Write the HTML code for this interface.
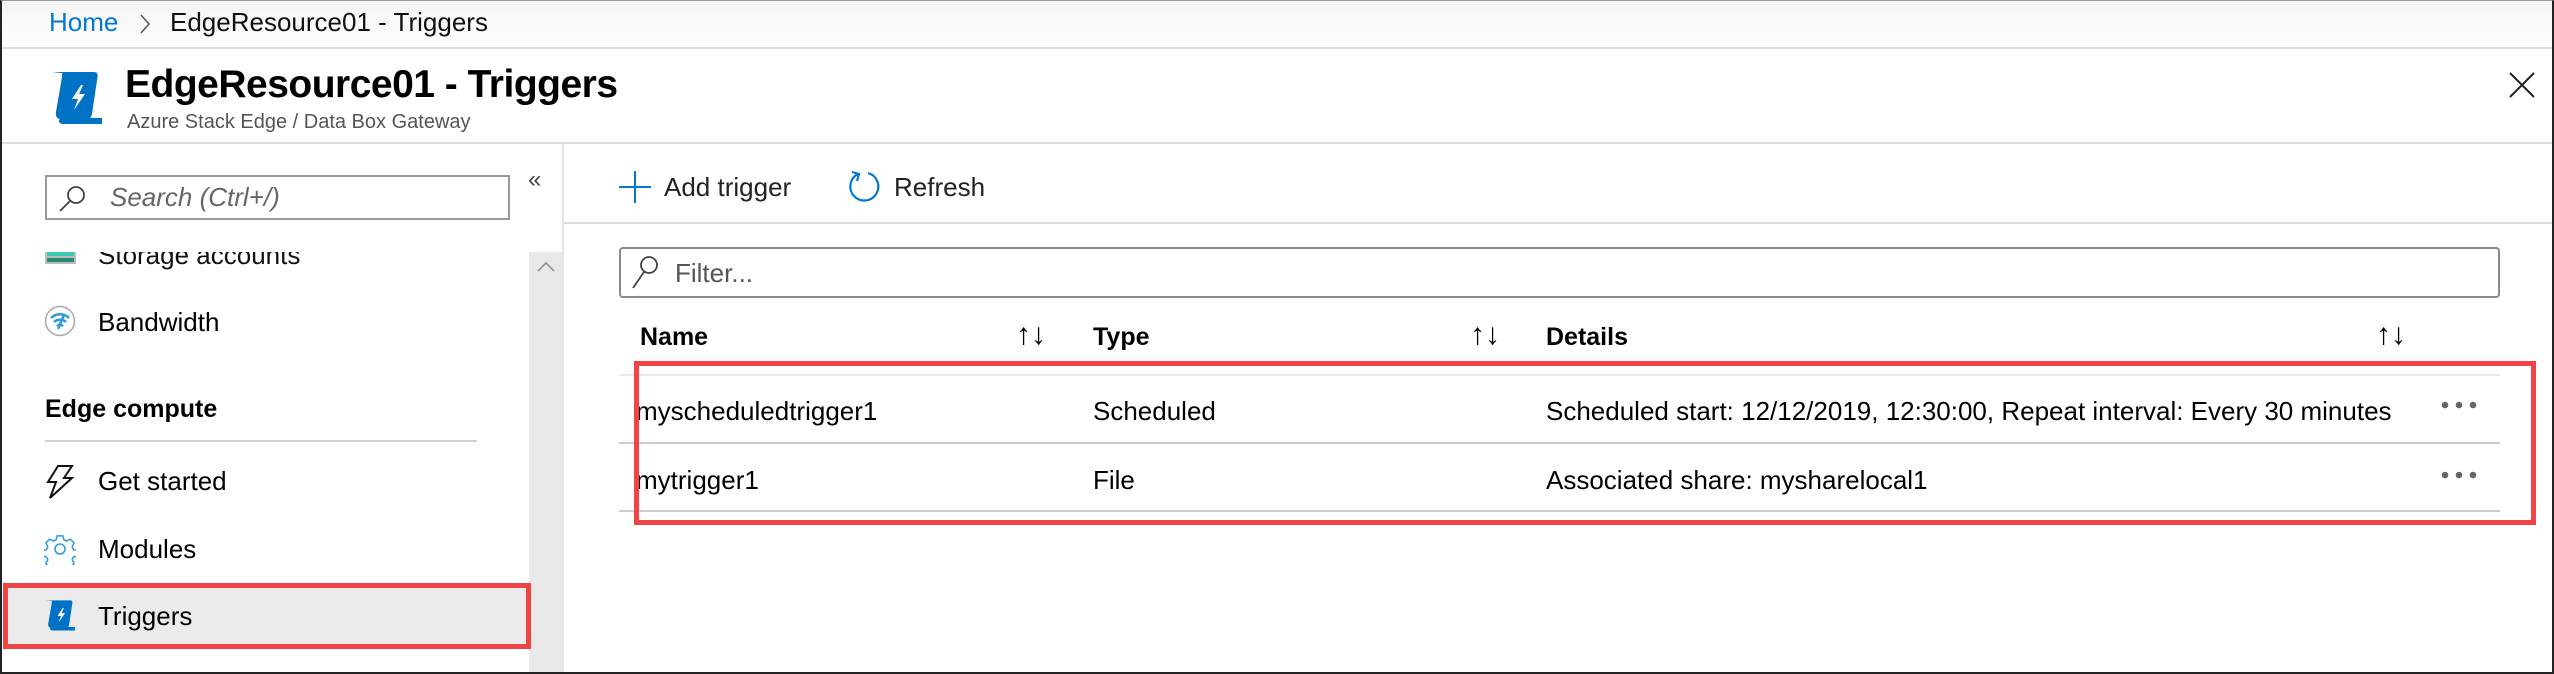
<!DOCTYPE html>
<html><head><meta charset="utf-8"><style>
*{margin:0;padding:0;box-sizing:border-box}
body{width:2554px;height:674px;overflow:hidden;background:#fff;font-family:"Liberation Sans",sans-serif;color:#000;position:relative}
.a{position:absolute;white-space:nowrap}
.t{font-size:26px;line-height:30px}
</style></head><body>
<div class="a" style="left:0;top:0;width:2554px;height:674px;border:2px solid #222;border-top:1px solid #999;z-index:50;pointer-events:none"></div>
<div class="a" style="left:0;top:0;width:2554px;height:49px;background:linear-gradient(#f4f4f4,#fff)"></div>
<div class="a" style="left:0;top:47px;width:2554px;height:2px;background:#ddd"></div>
<div class="a t" style="left:49px;top:7px;color:#0078d4">Home</div>
<svg class="a" style="left:138px;top:13px" width="14" height="22"><path d="M3 2l8 9-8 9" fill="none" stroke="#555" stroke-width="1.5"/></svg>
<div class="a t" style="left:170px;top:7px;color:#111">EdgeResource01 - Triggers</div>
<svg class="a" style="left:50px;top:68px" width="56" height="62" viewBox="0 0 56 62"><path d="M2 4h12c3 0 5 1 5 4v0H14c0-2-1-3-3-3z" fill="#0072c6"/><path d="M16 4h28c3 0 4 2 3.5 5L42 46c-1 4-3 6-6 6H14c-6 0-9-3-8-8L12 9c0-2-1-4 4-5z" fill="#0072c6"/><path d="M14 50h38v6H14c-3 0-5-1-5-3s2-3 5-3z" fill="#0072c6"/><path d="M31 17l-9 14h6l-4 11 11-16h-6l4-9z" fill="#fff"/></svg>
<div class="a" style="left:125px;top:62px;font-size:39px;line-height:46px;font-weight:600;letter-spacing:-0.5px">EdgeResource01 - Triggers</div>
<div class="a" style="left:127px;top:110px;font-size:20px;line-height:24px;color:#555">Azure Stack Edge / Data Box Gateway</div>
<svg class="a" style="left:2508px;top:71px" width="28" height="28"><path d="M2 2l24 24M26 2L2 26" stroke="#222" stroke-width="2"/></svg>
<div class="a" style="left:0;top:142px;width:2554px;height:2px;background:#ddd"></div>
<div class="a" style="left:562px;top:144px;width:2px;height:530px;background:#e4e4e4"></div>
<div class="a" style="left:529px;top:252px;width:33px;height:422px;background:#e8e8e8"></div>
<svg class="a" style="left:536px;top:260px" width="20" height="14"><path d="M2 11l8-8 8 8" fill="none" stroke="#888" stroke-width="1.5"/></svg>
<div class="a" style="left:528px;top:166px;font-size:24px;color:#444">«</div>
<div class="a" style="left:45px;top:175px;width:465px;height:45px;border:2px solid #999;background:#fff"></div>
<svg class="a" style="left:58px;top:184px" width="30" height="28"><circle cx="18" cy="11" r="8" fill="none" stroke="#444" stroke-width="1.8"/><path d="M12 17L2 27" stroke="#444" stroke-width="1.8"/></svg>
<div class="a t" style="left:110px;top:182px;font-style:italic;color:#666">Search (Ctrl+/)</div>
<div class="a" style="left:0;top:252px;width:529px;height:30px;overflow:hidden">
 <div class="a" style="left:45px;top:-1px;width:31px;height:13px;background:#bbb"></div>
 <div class="a" style="left:47px;top:0px;width:27px;height:4px;background:#3cc8b0"></div>
 <div class="a" style="left:47px;top:6px;width:27px;height:4px;background:#2a8a7a"></div>
 <div class="a t" style="left:98px;top:-12px;color:#111">Storage accounts</div>
</div>
<svg class="a" style="left:44px;top:305px" width="32" height="32"><circle cx="16" cy="16" r="14.5" fill="#fff" stroke="#aaa" stroke-width="1.5"/><path d="M7 13c5-5 13-5 18 0M10 17c3-3 9-3 12 0M13 21c2-1.5 4-1.5 6 0" fill="none" stroke="#2b9bde" stroke-width="2.5"/><path d="M20 10l-6 14" stroke="#2b9bde" stroke-width="2.5"/></svg>
<div class="a t" style="left:98px;top:307px">Bandwidth</div>
<div class="a t" style="left:45px;top:394px;font-weight:bold;font-size:25px">Edge compute</div>
<div class="a" style="left:45px;top:440px;width:432px;height:2px;background:#d0d0d0"></div>
<svg class="a" style="left:44px;top:464px" width="32" height="36"><path d="M14 2h14l-8 12h8L6 34l6-16H4z" fill="none" stroke="#111" stroke-width="2"/></svg>
<div class="a t" style="left:98px;top:466px">Get started</div>
<svg class="a" style="left:44px;top:533px" width="32" height="32" viewBox="0 0 32 32"><path d="M13 2h6l1 4 3 1.5 4-2 4 4-2 4 1.2 3 4 1v6l-4 1-1.2 3 2 4-4 4-4-2-3 1.3-1 4h-6l-1-4-3-1.3-4 2-4-4 2-4-1.3-3-4-1v-6l4-1 1.3-3-2-4 4-4 4 2 3-1.5z" transform="scale(0.94) translate(1 1)" fill="none" stroke="#2b9bde" stroke-width="1.6"/><circle cx="16" cy="16" r="5" fill="none" stroke="#2b9bde" stroke-width="1.6"/></svg>
<div class="a t" style="left:98px;top:534px">Modules</div>
<div class="a" style="left:3px;top:583px;width:528px;height:66px;background:#ebebeb;border:5px solid #f04446"></div>
<svg class="a" style="left:44px;top:598px" width="34" height="36" viewBox="0 0 56 62"><path d="M2 4h12c3 0 5 1 5 4v0H14c0-2-1-3-3-3z" fill="#0072c6"/><path d="M16 4h28c3 0 4 2 3.5 5L42 46c-1 4-3 6-6 6H14c-6 0-9-3-8-8L12 9c0-2-1-4 4-5z" fill="#0072c6"/><path d="M14 50h38v6H14c-3 0-5-1-5-3s2-3 5-3z" fill="#0072c6"/><path d="M31 17l-9 14h6l-4 11 11-16h-6l4-9z" fill="#fff"/></svg>
<div class="a t" style="left:98px;top:601px">Triggers</div>
<svg class="a" style="left:619px;top:170px" width="32" height="34"><path d="M16 1v32M0 17h32" stroke="#0078d4" stroke-width="2"/></svg>
<div class="a t" style="left:664px;top:172px;color:#222">Add trigger</div>
<svg class="a" style="left:846px;top:168px" width="36" height="36"><path d="M12 6A14 14 0 1 0 22 5" fill="none" stroke="#0078d4" stroke-width="2.2"/><path d="M6 4l7 2-2 7" fill="none" stroke="#0078d4" stroke-width="2.2"/></svg>
<div class="a t" style="left:894px;top:172px;color:#222">Refresh</div>
<div class="a" style="left:564px;top:222px;width:1990px;height:2px;background:#ddd"></div>
<div class="a" style="left:619px;top:247px;width:1881px;height:51px;border:2px solid #8a8a8a;border-radius:4px"></div>
<svg class="a" style="left:630px;top:254px" width="30" height="36"><circle cx="19" cy="11" r="8" fill="none" stroke="#444" stroke-width="1.8"/><path d="M14 18L3 34" stroke="#444" stroke-width="1.8"/></svg>
<div class="a t" style="left:675px;top:258px;color:#555">Filter...</div>
<div class="a t" style="left:640px;top:322px;font-weight:bold;font-size:25px">Name</div>
<div class="a t" style="left:1093px;top:322px;font-weight:bold;font-size:25px">Type</div>
<div class="a t" style="left:1546px;top:322px;font-weight:bold;font-size:25px">Details</div>
<div class="a" style="left:1016px;top:318px;font-size:30px;line-height:34px">↑↓</div>
<div class="a" style="left:1470px;top:318px;font-size:30px;line-height:34px">↑↓</div>
<div class="a" style="left:2376px;top:318px;font-size:30px;line-height:34px">↑↓</div>
<div class="a" style="left:619px;top:374px;width:1881px;height:2px;background:#eaeaea"></div>
<div class="a" style="left:619px;top:442px;width:1881px;height:2px;background:#ccc"></div>
<div class="a" style="left:619px;top:510px;width:1881px;height:2px;background:#ccc"></div>
<div class="a t" style="left:636px;top:396px">myscheduledtrigger1</div>
<div class="a t" style="left:1093px;top:396px">Scheduled</div>
<div class="a t" style="left:1546px;top:396px">Scheduled start: 12/12/2019, 12:30:00, Repeat interval: Every 30 minutes</div>
<div class="a t" style="left:636px;top:465px">mytrigger1</div>
<div class="a t" style="left:1093px;top:465px">File</div>
<div class="a t" style="left:1546px;top:465px">Associated share: mysharelocal1</div>
<svg class="a" style="left:2440px;top:400px" width="40" height="10"><circle cx="5" cy="5" r="3.3" fill="#666"/><circle cx="19" cy="5" r="3.3" fill="#666"/><circle cx="33" cy="5" r="3.3" fill="#666"/></svg>
<svg class="a" style="left:2440px;top:470px" width="40" height="10"><circle cx="5" cy="5" r="3.3" fill="#666"/><circle cx="19" cy="5" r="3.3" fill="#666"/><circle cx="33" cy="5" r="3.3" fill="#666"/></svg>
<div class="a" style="left:634px;top:361px;width:1902px;height:164px;border:5px solid #f04446"></div>
</body></html>
